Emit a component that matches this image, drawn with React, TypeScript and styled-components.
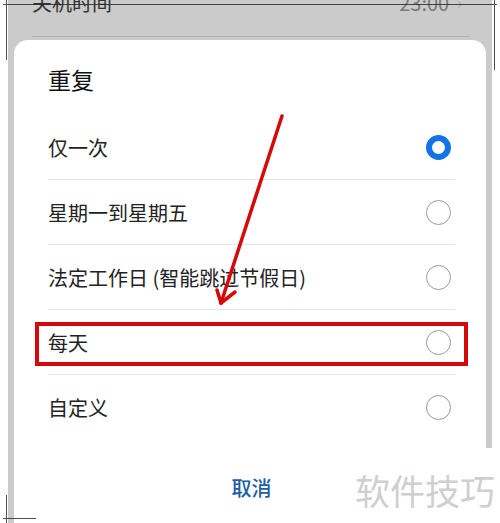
import React from "react";
import styled, { createGlobalStyle, css } from "styled-components";

const Global = createGlobalStyle`
  html, body { margin: 0; padding: 0; background: #ffffff; }
  body { font-family: "Noto Sans CJK SC", "Noto Sans", sans-serif; }
`;

const Page = styled.div`
  position: relative;
  width: 500px;
  height: 523px;
  overflow: hidden;
  background: #ffffff;
`;

const Frame = styled.div`
  position: relative;
  margin-left: 8px;
  width: 484px;
  height: 523px;
  box-sizing: border-box;
  padding: 0 6px;
  background: #cbcbcb;
  display: flex;
  flex-direction: column;
  &::after {
    content: "";
    position: absolute;
    right: 0;
    top: 448px;
    width: 6px;
    bottom: 0;
    background: #ffffff;
  }
`;

const BgRow = styled.div`
  margin-top: -15px;
  height: 34px;
  padding: 0 24px 0 18px;
  display: flex;
  align-items: center;
  justify-content: space-between;
  font-size: 20px;
  color: #333333;
`;

const BgValue = styled.span`
  color: #7a7a7a;
  display: flex;
  align-items: center;
  gap: 8px;
`;

const Chevron = styled.span`
  color: #a8a8a8;
  font-size: 16px;
`;

const BgDivider = styled.div`
  margin: 17px 16px 0 18px;
  border-top: 1px solid #b3b3b3;
`;

const Dialog = styled.div`
  margin-top: 3px;
  flex: 1;
  background: #ffffff;
  border-radius: 14px 14px 0 0;
  padding: 0 31px 0 34px;
  display: flex;
  flex-direction: column;
`;

const Title = styled.div`
  height: 75px;
  box-sizing: border-box;
  padding-top: 22px;
  font-size: 23px;
  line-height: 34px;
  color: #111111;
`;

const Row = styled.div<{ $last?: boolean; $marked?: boolean }>`
  position: relative;
  height: 65px;
  box-sizing: border-box;
  display: flex;
  align-items: center;
  justify-content: space-between;
  font-size: 20px;
  color: #222222;
  border-bottom: ${(p) => (p.$last ? "none" : "1px solid #e6e6e6")};
  ${(p) =>
    p.$marked &&
    css`
      &::after {
        content: "";
        position: absolute;
        left: -13px;
        right: -13px;
        top: 12px;
        bottom: 8px;
        border: 4px solid #d40a0a;
      }
    `}
`;

const Radio = styled.span<{ $on?: boolean }>`
  width: 25px;
  height: 25px;
  margin-right: 4px;
  box-sizing: border-box;
  border-radius: 50%;
  background: #ffffff;
  border: ${(p) => (p.$on ? "6px solid #1273e6" : "1.5px solid #9a9a9a")};
`;

const Footer = styled.div`
  padding-top: 33px;
  display: flex;
  justify-content: center;
  font-size: 20px;
  font-weight: 500;
  color: #1d5da6;
`;

const Watermark = styled.div`
  position: absolute;
  left: 355px;
  top: 464px;
  font-size: 35px;
  color: #cfcfcf;
  white-space: nowrap;
`;

const Overlay = styled.svg`
  position: absolute;
  left: 0;
  top: 0;
  pointer-events: none;
`;

const options = [
  { label: "仅一次", on: true },
  { label: "星期一到星期五" },
  { label: "法定工作日 (智能跳过节假日)" },
  { label: "每天", marked: true },
  { label: "自定义" },
];

export default function App() {
  return (
    <Page>
      <Global />
      <Frame>
        <BgRow>
          <span>关机时间</span>
          <BgValue>
            23:00 <Chevron>›</Chevron>
          </BgValue>
        </BgRow>
        <BgDivider />
        <Dialog>
          <Title>重复</Title>
          {options.map((o, i) => (
            <Row key={o.label} $last={i === options.length - 1} $marked={o.marked}>
              <span>{o.label}</span>
              <Radio $on={o.on} />
            </Row>
          ))}
          <Footer>取消</Footer>
        </Dialog>
      </Frame>
      <Watermark>软件技巧</Watermark>
      <Overlay width="500" height="523" viewBox="0 0 500 523">
        <g stroke="#222" strokeWidth="1" fill="none" opacity="0.8">
          <line x1="3" y1="4.5" x2="497" y2="4.5" />
          <line x1="6.5" y1="0" x2="6.5" y2="60" />
          <line x1="494.5" y1="0" x2="494.5" y2="70" />
          <line x1="6.5" y1="495" x2="6.5" y2="523" />
          <line x1="3" y1="518.5" x2="36" y2="518.5" />
        </g>
        <g stroke="#d40a0a" strokeWidth="3.5" strokeLinecap="round" fill="none">
          <line x1="282" y1="116" x2="221" y2="303" />
          <line x1="221" y1="303" x2="217" y2="290" />
          <line x1="221" y1="303" x2="235" y2="292" />
        </g>
      </Overlay>
    </Page>
  );
}
